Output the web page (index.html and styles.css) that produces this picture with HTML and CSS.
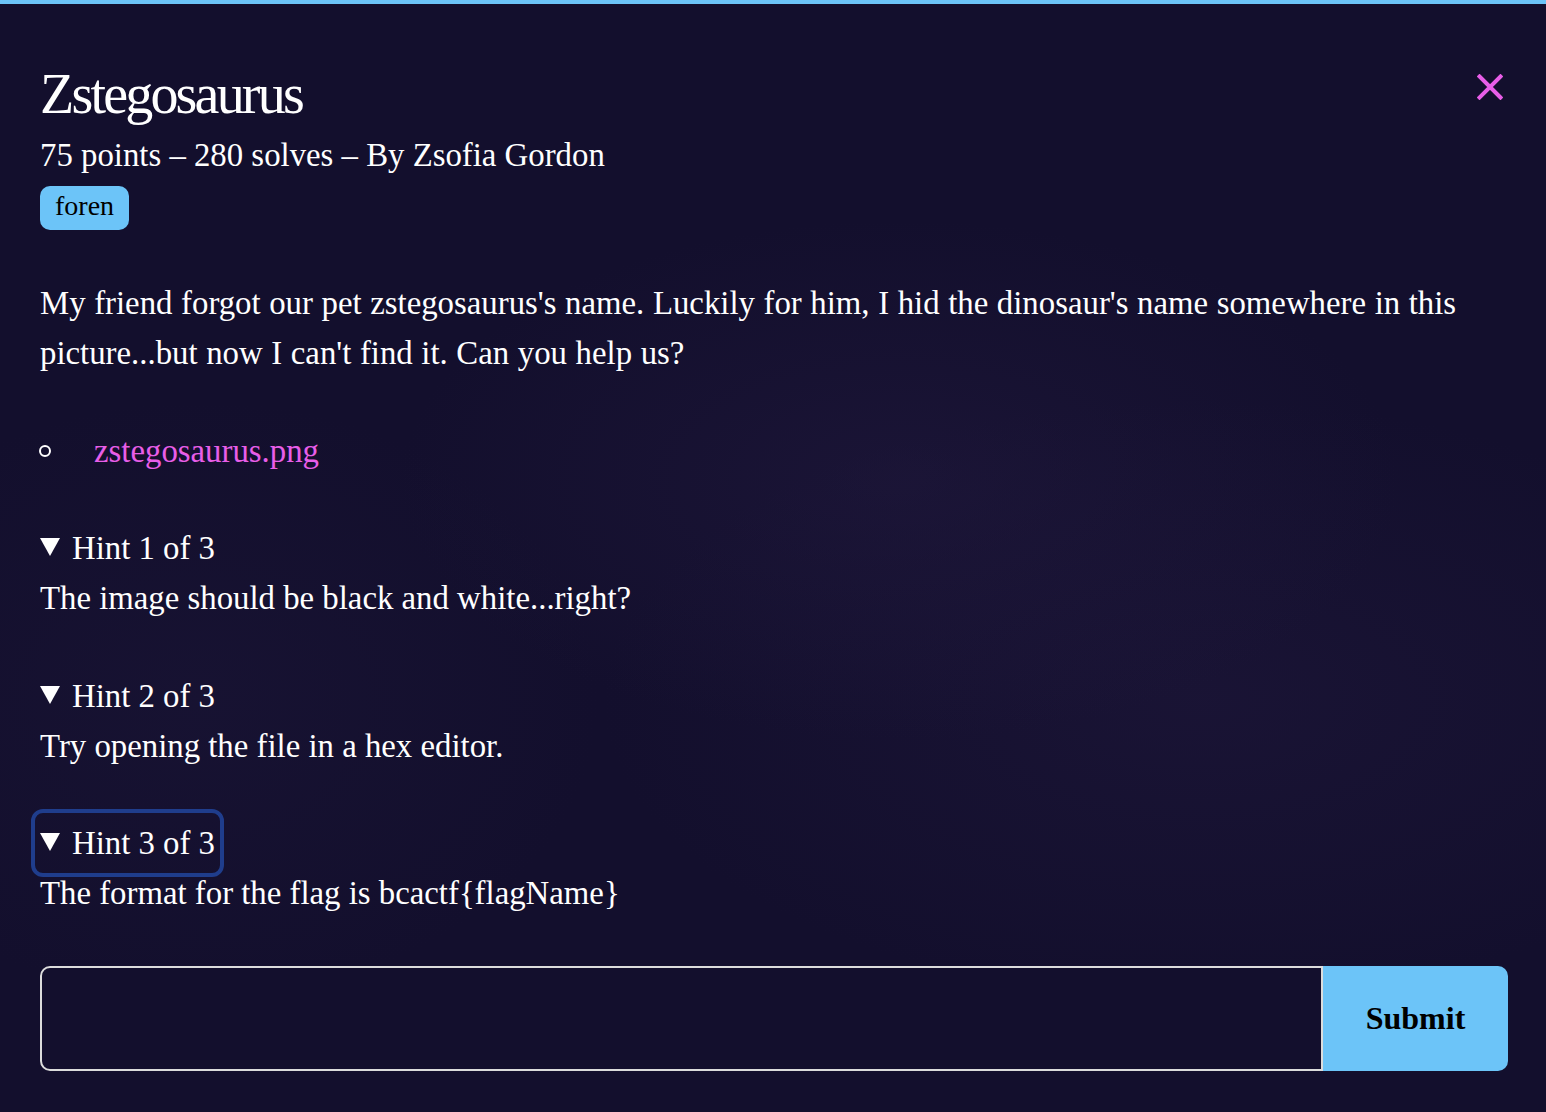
FILE: index.html
```html
<!DOCTYPE html>
<html lang="en">
<head>
<meta charset="utf-8">
<title>Zstegosaurus</title>
<link rel="stylesheet" href="styles.css">
</head>
<body>
<div class="topbar"></div>
<main class="modal">
  <header class="head">
    <div class="head-text">
      <h1 class="title">Zstegosaurus</h1>
      <div class="meta">75 points – 280 solves – By Zsofia Gordon</div>
      <span class="tag">foren</span>
    </div>
    <button class="close" aria-label="Close">
      <svg width="26" height="26" viewBox="0 0 26 26"><path d="M2.5 2.5 L23.5 23.5 M23.5 2.5 L2.5 23.5" stroke="#e85ee8" stroke-width="4" stroke-linecap="square" fill="none"/></svg>
    </button>
  </header>
  <div class="body">
    <p class="desc">My friend forgot our pet zstegosaurus's name. Luckily for him, I hid the dinosaur's name somewhere in this picture...but now I can't find it. Can you help us?</p>
    <ul class="files">
      <li class="file"><a class="link" href="#">zstegosaurus.png</a></li>
    </ul>
    <details class="hint" open>
      <summary class="hint-sum">Hint 1 of 3</summary>
      <p class="hint-text">The image should be black and white...right?</p>
    </details>
    <details class="hint" open>
      <summary class="hint-sum">Hint 2 of 3</summary>
      <p class="hint-text">Try opening the file in a hex editor.</p>
    </details>
    <details class="hint" open>
      <summary class="hint-sum focused">Hint 3 of 3</summary>
      <p class="hint-text">The format for the flag is bcactf{flagName}</p>
    </details>
    <form class="flag-form">
      <input class="flag-input" type="text" aria-label="Flag">
      <button class="submit" type="button">Submit</button>
    </form>
  </div>
</main>
</body>
</html>
```

FILE: styles.css
```css
html, body {
  margin: 0;
  padding: 0;
}
body {
  background-color: #130f2d;
  background-image:
    radial-gradient(ellipse 500px 260px at 900px 480px, rgba(40, 30, 70, 0.35), transparent),
    radial-gradient(ellipse 600px 300px at 1200px 700px, rgba(40, 30, 70, 0.3), transparent),
    radial-gradient(ellipse 400px 300px at 200px 700px, rgba(35, 28, 65, 0.25), transparent);
  color: #ffffff;
  font-family: "Liberation Serif", "Times New Roman", serif;
  font-size: 32.8px;
  line-height: 50px;
  min-height: 1112px;
}
.topbar {
  height: 4px;
  background: #6cc4f8;
}
.modal {
  padding: 54px 38px 40px 40px;
}
.head {
  display: flex;
  justify-content: space-between;
  align-items: flex-start;
}
.head-text {
  display: flex;
  flex-direction: column;
  align-items: flex-start;
}
.title {
  margin: 0;
  font-weight: normal;
  font-size: 56px;
  line-height: 72px;
  letter-spacing: -0.05em;
}
.meta {
  line-height: 50px;
}
.tag {
  margin-top: 6px;
  background: #6cc4f8;
  color: #000;
  font-size: 28px;
  line-height: 38px;
  padding: 1px 15px 5px;
  border-radius: 10px;
}
.close {
  margin-top: 16px;
  margin-right: 5px;
  width: 26px;
  height: 26px;
  padding: 0;
  border: none;
  background: transparent;
  display: flex;
}
.body {
  margin-top: 48px;
  display: flex;
  flex-direction: column;
  gap: 47.5px;
}
.desc {
  margin: 0;
  word-spacing: 0.4px;
}
.files {
  list-style: none;
  margin: 0;
  padding: 0;
}
.file {
  display: flex;
  align-items: center;
}
.file::before {
  content: "";
  width: 8px;
  height: 8px;
  border: 2px solid #fff;
  border-radius: 50%;
  margin-left: -1px;
  margin-right: 43px;
}
.link {
  color: #e85ee8;
  text-decoration: none;
}
.hint {
  display: block;
}
.hint-sum {
  display: flex;
  width: fit-content;
  align-items: center;
  height: 50px;
  list-style: none;
  cursor: pointer;
}
.hint-sum::-webkit-details-marker {
  display: none;
}
.hint-sum::before {
  content: "";
  width: 0;
  height: 0;
  border-left: 10.5px solid transparent;
  border-right: 10.5px solid transparent;
  border-top: 18px solid #fff;
  margin-right: 12px;
  margin-top: -2px;
}
.focused {
  outline: 4px solid #1f3d8c;
  outline-offset: 5px;
  border-radius: 3px;
}
.hint-text {
  margin: 0;
}
.flag-form {
  display: flex;
  height: 105px;
}
.flag-input {
  flex: 1;
  box-sizing: border-box;
  height: 105px;
  margin: 0;
  border: 2px solid #dcdcdc;
  border-radius: 10px 0 0 10px;
  background: #130f2d;
  color: #fff;
  font-family: inherit;
  font-size: 30px;
  padding: 0 20px;
}
.submit {
  width: 185px;
  height: 105px;
  margin: 0;
  border: none;
  border-radius: 0 10px 10px 0;
  background: #6cc4f8;
  color: #000;
  font-family: "Liberation Serif", "Times New Roman", serif;
  font-weight: bold;
  font-size: 32px;
}
```
